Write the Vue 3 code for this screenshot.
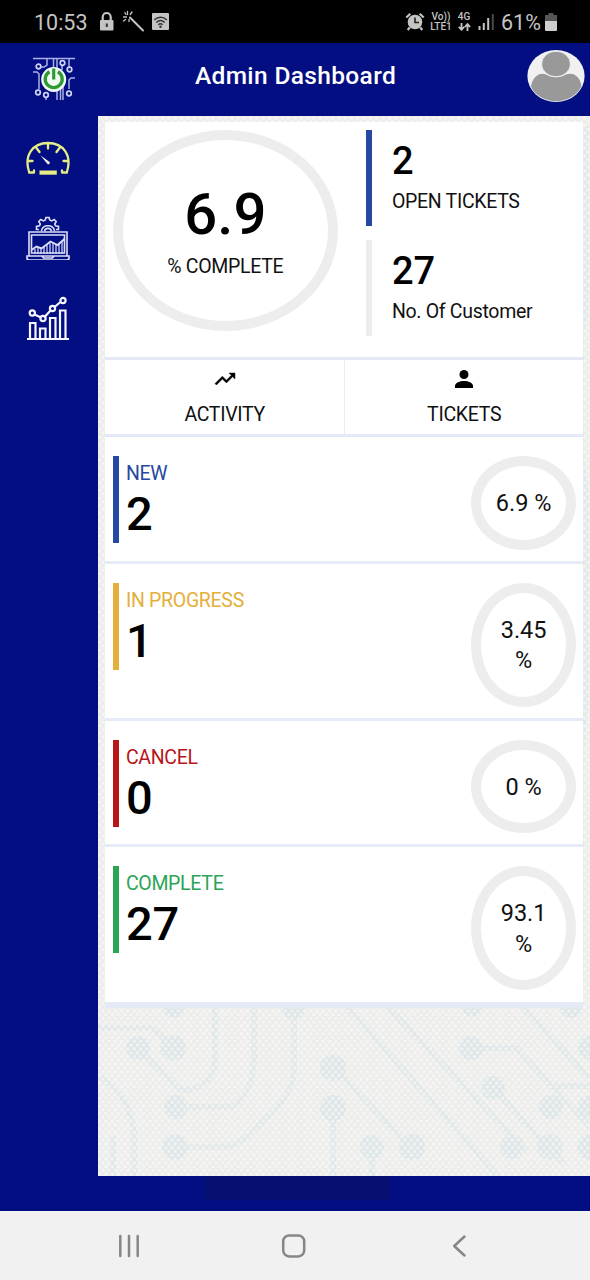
<script setup>
const rows = [
  { label: 'NEW', count: '2', percent: '6.9 %', tone: 'blue', size: 'short' },
  { label: 'IN PROGRESS', count: '1', percent: '3.45 %', tone: 'amber', size: 'tall' },
  { label: 'CANCEL', count: '0', percent: '0 %', tone: 'red', size: 'short' },
  { label: 'COMPLETE', count: '27', percent: '93.1 %', tone: 'green', size: 'tall' },
]
</script>

<template>
  <div class="screen">
    <div class="status">
      <span class="clock">10:53</span>
      <svg class="left-icons" width="74" height="24" viewBox="0 0 74 24">
        <g fill="#c4c4c4">
          <rect x="1" y="10" width="13.500" height="10.500" rx="1" />
          <path d="M3.700 12V7a4 4 0 0 1 8 0V12" fill="none" stroke="#c4c4c4" stroke-width="2.200" />
          <path d="M6.800 13.500h2v3.500h-2z" fill="#333" />
          <rect x="53" y="3" width="17" height="17" rx="1" />
        </g>
        <g fill="none" stroke="#c4c4c4" stroke-linecap="round">
          <path d="M31 7.500l13 13" stroke-width="2" />
          <path d="M28.500 1.500v3M25.800 2.500l1.200 2M33 2l-1.800 2.500M24.500 7h3M26.500 9.500l-2 1.500M30 9.500v2" stroke-width="1.300" />
        </g>
        <g fill="none" stroke="#333" stroke-width="1.400">
          <path d="M55.200 10c3.700-3.600 9-3.600 12.600 0M57.300 12.500c2.700-2.500 5.900-2.500 8.400 0M59.300 14.800c1.400-1.300 3-1.300 4.400 0" />
        </g>
        <circle cx="61.500" cy="16.700" r="1.200" fill="#333" />
      </svg>
      <span class="grow"></span>
      <svg class="alarm" width="20" height="20" viewBox="0 0 20 20">
        <g fill="none" stroke="#c4c4c4" stroke-width="2.200">
          <path d="M1.300 5.500l4-3.700M18.700 5.500l-4-3.700M4.700 15.500l-2 2.500M15.300 15.500l2 2.500" />
        </g>
        <circle cx="10" cy="10" r="7.300" fill="#c4c4c4" />
        <path d="M10 5.500v5h4" fill="none" stroke="#222" stroke-width="1.600" />
      </svg>
      <div class="mini volte"><span>Vo))</span><span>LTE1</span></div>
      <div class="mini fourg">
        <span>4G</span>
        <svg width="13" height="8" viewBox="0 0 13 8">
          <path d="M3.500 0v6M.8 3.800l2.700 2.900 2.700-2.900M9.500 8V1.500M6.800 4l2.700-2.900L12.200 4" fill="none" stroke="#c4c4c4" stroke-width="1.800" />
        </svg>
      </div>
      <svg class="signal" width="16" height="17" viewBox="0 0 16 17">
        <path d="M1.500 13v4M5.800 10v7M10.200 5v12" stroke="#c4c4c4" stroke-width="2" />
        <path d="M14.800 1v16" stroke="#4a4a4a" stroke-width="2" />
      </svg>
      <span class="charge">61%</span>
      <svg class="battery" width="12" height="18" viewBox="0 0 12 18">
        <path d="M3.500 0h5v2H12v6H0V2h3.500z" fill="#565656" />
        <path d="M0 8h12v9a1 1 0 0 1-1 1H1a1 1 0 0 1-1-1z" fill="#d0d0d0" />
      </svg>
    </div>

    <header class="header">
      <svg class="logo" width="44" height="44" viewBox="0 0 44 44">
        <g fill="none" stroke="#aab0e6" stroke-width="1.500">
          <path d="M1 1.500h42M15 2v6l-3 2H9M21.500 2v10M25 2v10M30 8v5M37 2v8M1 15h4l2 2v15M43 21h-4l-2 2v9M14 38v5M25 34v9M28.500 32v11M31 28v15" />
        </g>
        <g fill="#030e82" stroke="#cfd4f5" stroke-width="1.700">
          <circle cx="6.500" cy="9.500" r="2.300" />
          <circle cx="30.500" cy="6" r="2.300" />
          <circle cx="37.500" cy="12.500" r="2.300" />
          <circle cx="6" cy="35.500" r="2.300" />
          <circle cx="14" cy="38" r="2.300" />
          <circle cx="37" cy="36.500" r="2.300" />
        </g>
        <circle cx="21.700" cy="22.500" r="12.500" fill="#f2fbf3" />
        <path d="M17.500 14.700a8.500 8.500 0 1 0 8.400 0" fill="none" stroke="#2c9b36" stroke-width="3.300" />
        <path d="M21.700 11.500v11" stroke="#2c9b36" stroke-width="3.200" />
      </svg>
      <h1>Admin Dashboard</h1>
      <svg class="avatar" width="58" height="52" viewBox="0 0 58 52">
        <defs><clipPath id="face"><ellipse cx="29" cy="26" rx="27.800" ry="25.300" /></clipPath></defs>
        <ellipse cx="29" cy="26" rx="28.600" ry="26" fill="#f1f1f1" />
        <g clip-path="url(#face)" fill="#999">
          <path d="M4 36C6 27 12 22 19 24.500c6 3.500 14 3.500 20 0C47 22 53 27 54.500 36L50 52H8z" />
          <ellipse cx="29" cy="14" rx="14.500" ry="12.800" stroke="#f1f1f1" stroke-width="1" />
        </g>
      </svg>
    </header>

    <div class="body">
      <nav class="side">
        <svg width="44" height="44" viewBox="0 -1 44 44">
          <g fill="none" stroke="#e3ee87" stroke-width="2.300" stroke-linecap="round">
            <path d="M8 35.500H3.200C-2.500 18 7 6 22 6s24.500 12 18.800 29.500H36M8 35.500v-2M36 35.500v-2M22 6.500v5M10.500 11l3 4M33.500 11l-3 4M2 24h4.500M37.500 24H42" />
          </g>
          <path d="M13.500 33.500h17.300v4.200H13.500z" fill="#e3ee87" />
          <path d="M14.500 18.500l9.200 6.500a1.700 1.700 0 0 1-2 2.300z" fill="#f3f3e8" />
        </svg>
        <svg width="44" height="44" viewBox="0 0 44 44">
          <g fill="none" stroke="#dce0fa" stroke-width="1.600">
            <path d="M13 13.500h-2.500v-3l3-.7.8-1.800-1.500-2.500 2-2 2.500 1.400 2-.9.600-2.500h3.200l.6 2.500 2 .9 2.500-1.400 2 2L28.700 8l.8 1.800 3 .7v3H30" />
            <path d="M15.500 15c1-7 12-7 13 0M18.500 15c1-3.500 6-3.500 7 0" />
            <path d="M3 16h38v24H3zM5.500 19h33v18h-33zM1 40h15l1.500 2h9l1.500-2h15v3l-2 1H3l-2-1z" />
            <path d="M5.500 34l5-3.500 5 2 9-7 7 3.500 7-6" stroke-width="1.900" />
            <path d="M9 33v5M12 32v6M15 33v5M18 31v7M21 29v9M24 27v11M27 27v11M30 29v9M33 28v10M36 26v12" stroke-width="1.200" />
          </g>
        </svg>
        <svg width="44" height="44" viewBox="0 0 44 44">
          <g fill="none" stroke="#f5f6ff" stroke-width="2.200">
            <path d="M1 43h42M4 42V27h5.500v15M14 42V32.500h5.500V42M24 42V22h5.500v20M34 42V14.500h5.500V42" />
            <path d="M8.500 18.500l6.500 3M19 20.500l5.500-6M28.500 11l6-5" />
            <circle cx="6.300" cy="17" r="2.600" />
            <circle cx="17" cy="22.500" r="2.600" />
            <circle cx="26.500" cy="12.500" r="2.600" />
            <circle cx="37" cy="4.500" r="2.600" />
          </g>
        </svg>
      </nav>

      <main class="main">
        <svg class="circuit" width="492" height="1060" viewBox="0 0 492 1060">
          <defs>
            <pattern id="dots" width="6.300" height="7.600" patternUnits="userSpaceOnUse">
              <circle cx="1.600" cy="1.900" r="1.600" fill="#f9f9f4" fill-opacity=".8" />
              <circle cx="4.750" cy="5.700" r="1.600" fill="#f9f9f4" fill-opacity=".8" />
            </pattern>
          </defs>
          <rect width="492" height="1060" fill="#ecedec" />
          <g fill="none" stroke="#e2e8e9" stroke-width="6">
            <path d="M0 912h55l12 12M117 885v55q0 22-12 28-18 12-28 0L42 935M156 885v60q-2 33-22 46H90M196 885v65q0 22-14 38l-30 30q-15 13-28 13H80" />
            <path d="M235 875l165 185M274 875l155 160M235 950l85 90M235 1000v60M380 932h38l74 79M410 875l82 88M450 970h42M395 972l70 75M0 960q34 20 36 58v42M15 1020v40M274 1040v20" />
            <path d="M488 10v180l-5 30v120l5 40v190l-5 70v230" />
          </g>
          <g fill="#dee6e9">
            <circle cx="40" cy="932" r="12" /><circle cx="75" cy="932" r="13" />
            <circle cx="76" cy="891" r="11" /><circle cx="196" cy="893" r="11" />
            <circle cx="78" cy="991" r="12" /><circle cx="77" cy="1031" r="13" />
            <circle cx="235" cy="952" r="13" /><circle cx="235" cy="992" r="13" />
            <circle cx="274" cy="1031" r="12" /><circle cx="314" cy="1031" r="13" />
            <circle cx="373" cy="932" r="12" /><circle cx="395" cy="972" r="12" />
            <circle cx="414" cy="1031" r="12" /><circle cx="453" cy="991" r="12" />
            <circle cx="452" cy="1031" r="13" /><circle cx="492" cy="932" r="12" />
            <circle cx="492" cy="991" r="12" /><circle cx="492" cy="1031" r="13" />
            <circle cx="374" cy="891" r="10" /><circle cx="473" cy="891" r="11" />
          </g>
          <rect width="492" height="1060" fill="url(#dots)" />
        </svg>

        <section class="card">
          <div class="summary">
            <div class="ring big">
              <strong>6.9</strong>
              <span>% COMPLETE</span>
            </div>
            <div class="totals">
              <div class="total open"><strong>2</strong><span>OPEN TICKETS</span></div>
              <div class="total"><strong>27</strong><span>No. Of Customer</span></div>
            </div>
          </div>
          <div class="tabs">
            <div class="tab">
              <svg width="24" height="24" viewBox="0 0 24 24"><path d="M16 6l2.290 2.290-4.880 4.880-4-4L2 16.590 3.410 18l6-6 4 4 6.300-6.290L22 12V6z" stroke="#111" stroke-width=".5" /></svg>
              <span>ACTIVITY</span>
            </div>
            <div class="tab">
              <svg width="24" height="24" viewBox="0 0 24 24"><circle cx="12" cy="7.500" r="4.500" /><path d="M3 21v-2c0-3.300 5-5 9-5s9 1.700 9 5v2z" /></svg>
              <span>TICKETS</span>
            </div>
          </div>
          <div v-for="row in rows" :key="row.label" class="row" :class="[row.size, row.tone]">
            <div class="figure">
              <span>{{ row.label }}</span>
              <strong>{{ row.count }}</strong>
            </div>
            <div class="ring small">{{ row.percent }}</div>
          </div>
        </section>
      </main>
    </div>

    <div class="strip"><div class="shade"></div></div>

    <div class="keys">
      <svg width="590" height="69" viewBox="0 0 590 69" fill="none" stroke="#868686" stroke-width="2.500" stroke-linecap="round" stroke-linejoin="round">
        <path d="M120.300 25v20M129 25v20M137.700 25v20" />
        <rect x="283.200" y="24.400" width="21" height="21" rx="6" />
        <path d="M464.500 25.500l-10.300 9.500 10.300 9.500" />
      </svg>
    </div>
  </div>
</template>

<style>
body {
  margin: 0;
  background: #030e82;
}
</style>

<style scoped>
.screen {
  width: 590px;
  height: 1280px;
  overflow: hidden;
  display: flex;
  flex-direction: column;
  background: #030e82;
  font-family: Roboto, "Liberation Sans", sans-serif;
  color: #111;
}
.screen svg { display: block; flex: none; }
.screen strong { font-weight: 500; color: #000; }

.status {
  height: 43px;
  flex: none;
  background: #000;
  color: #c4c4c4;
  display: flex;
  align-items: center;
  padding: 0 33px 0 34px;
  box-sizing: border-box;
}
.clock { font-size: 21.500px; width: 65px; line-height: 44px; padding-top: 2px; }
.grow { flex: 1; }
.alarm { margin-right: 5px; }
.mini {
  display: flex;
  flex-direction: column;
  font-size: 10px;
  font-weight: 500;
  line-height: 10px;
  align-items: center;
}
.volte { width: 22px; margin-right: 5px; }
.fourg { width: 14px; margin-right: 7px; }
.fourg svg { margin-top: 1px; }
.signal { margin-right: 7px; }
.charge { font-size: 21.500px; width: 44px; padding-top: 2px; white-space: nowrap; }

.header {
  height: 73px;
  flex: none;
  display: flex;
  align-items: center;
  justify-content: space-between;
  padding: 0 5px 7px 32px;
  box-sizing: border-box;
}
.header h1 {
  margin: 0 0 1px 36px;
  font-size: 24.500px;
  font-weight: 500;
  letter-spacing: .35px;
  color: #fff;
  white-space: nowrap;
}
.logo { margin-top: 5px; }
.avatar { margin: 0 0 1px 48px; }

.body { height: 1060px; flex: none; display: flex; }
.side {
  width: 98px;
  flex: none;
  display: flex;
  flex-direction: column;
  gap: 36px;
  padding: 20px 0 0 25.600px;
  box-sizing: border-box;
}
.main { flex: 1; position: relative; overflow: hidden; }
.circuit { position: absolute; left: 0; top: 0; }
.card {
  position: relative;
  margin: 6px 6.600px 0 7.400px;
  background: #fff;
  border-bottom: 3px solid #e5ebf5;
}
.summary {
  height: 238px;
  box-sizing: border-box;
  padding: 7.600px 0 0 7.700px;
  display: flex;
  border-bottom: 3px solid #e5e9f7;
}
.ring {
  box-sizing: border-box;
  border: 10px solid #ededed;
  border-radius: 50%;
}
.big {
  width: 224.500px;
  height: 201px;
  display: flex;
  flex-direction: column;
  align-items: center;
}
.big strong { font-size: 58px; line-height: 66px; margin-top: 41px; }
.big span { font-size: 19.500px; line-height: 24px; margin-top: 8px; letter-spacing: -.3px; }
.totals { margin-left: 28.300px; display: flex; flex-direction: column; gap: 14px; }
.total {
  height: 96px;
  box-sizing: border-box;
  border-left: 6px solid #ededed;
  padding: 10px 0 0 20px;
  display: flex;
  flex-direction: column;
}
.total.open { border-color: #2648a0; }
.total strong { font-size: 38px; line-height: 43px; }
.total span { font-size: 19.500px; letter-spacing: -.3px; line-height: 24px; margin-top: 7px; white-space: nowrap; }

.tabs { height: 77px; box-sizing: border-box; display: flex; border-bottom: 3px solid #e5e9f7; }
.tab {
  flex: 1;
  display: flex;
  flex-direction: column;
  align-items: center;
  padding-top: 7px;
}
.tab:first-child { border-right: 1.500px solid #e8ecf8; }
.tab span { font-size: 19.500px; letter-spacing: -.3px; line-height: 24px; margin-top: 12px; }

.row {
  box-sizing: border-box;
  border-bottom: 3px solid #e5ebf7;
  padding: 19.200px 7.300px 0 7.500px;
  display: flex;
  justify-content: space-between;
  align-items: flex-start;
}
.short { height: 126.500px; }
.tall { height: 157.300px; }
.figure {
  height: 87px;
  box-sizing: border-box;
  border-left: 6px solid currentColor;
  padding: 6px 0 0 7px;
  display: flex;
  flex-direction: column;
}
.figure span { font-size: 19.500px; letter-spacing: -.3px; line-height: 24px; }
.figure strong { font-size: 47px; line-height: 56px; }
.blue .figure { color: #2648a0; }
.amber .figure { color: #e4af3a; }
.red .figure { color: #b81519; }
.green .figure { color: #2ba456; }
.small {
  width: 105px;
  padding: 22px 15px 21px;
  font-size: 23.500px;
  line-height: 30.500px;
  text-align: center;
}
.short .small { padding: 22px 10px 21px; }

.strip { height: 35px; flex: none; display: flex; padding-left: 205px; box-sizing: border-box; }
.shade { width: 184px; height: 24px; background: #06106e; }
.keys { height: 69px; flex: none; background: #f1f1f1; }
</style>
